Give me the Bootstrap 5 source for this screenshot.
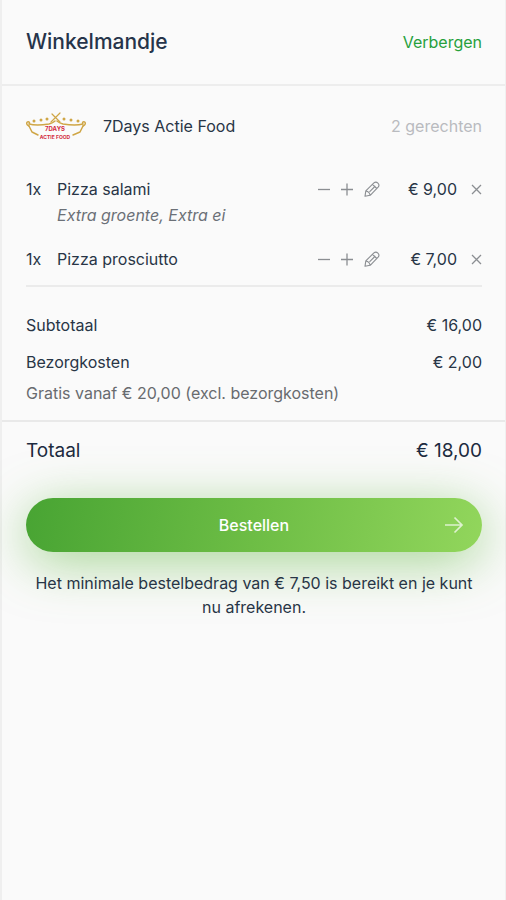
<!DOCTYPE html>
<html lang="nl">
<head>
<meta charset="utf-8">
<meta name="viewport" content="width=device-width, initial-scale=1">
<title>Winkelmandje</title>
<link href="https://cdn.jsdelivr.net/npm/bootstrap@5.3.0/dist/css/bootstrap.min.css" rel="stylesheet">
<style>
  body { font-family: Inter, "Liberation Sans", sans-serif; font-size: 16px; line-height: 24px; color: #283546; background: #fafafa; }
  .basket { border-left: 2px solid #efefef; border-right: 1px solid #f0f0f0; }
  .basket-head, .shop, .lines, .costs, .checkout { padding-left: 24px; padding-right: 23px; }
  .basket-head { padding-top: 26px; padding-bottom: 26px; border-bottom: 2px solid #ededed; }
  .basket-title { font-size: 21px; line-height: 32px; font-weight: 500; color: #26344a; }
  .hide-link { color: #26a03c; }
  .shop { padding-top: 24px; }
  .shop-name { padding-left: 17px; }
  .dish-count { color: #b9bbbf; }
  .dish { line-height: 26px; margin-bottom: 18px; }
  .dish:last-child { margin-bottom: 0; }
  .lines { padding-top: 34px; }
  .dish-list { padding-bottom: 13px; border-bottom: 2px solid #ebebeb; }
  .qty { width: 31px; }
  .extras { color: #6b7077; }
  .tool { color: #8b8e92; line-height: 0; }
  .tools { gap: 11px; }
  .price { width: 77px; }
  .remove { margin-left: 14px; }
  .costs { padding-top: 26px; padding-bottom: 15px; border-bottom: 2px solid #e9e9e9; }
  .cost-row { margin-bottom: 13px; }
  .hint { color: #686b6f; margin-top: -6px; }
  .checkout { padding-top: 16px; }
  .total { font-size: 19px; line-height: 26px; color: #1d2b40; }
  .order { margin-top: 34px; height: 54px; font-weight: 500; color: #fff; background: linear-gradient(100deg, #48a433, #6dbd45 50%, #92d65c); box-shadow: 0 10px 52px rgba(94, 183, 62, .55); }
  .order:hover { color: #fff; }
  .order-arrow { right: 18px; }
  .note { margin-top: 19px; }
</style>
</head>
<body>
<main class="basket min-vh-100">
  <header class="basket-head d-flex justify-content-between align-items-center">
    <h1 class="basket-title m-0">Winkelmandje</h1>
    <a href="#" class="hide-link text-decoration-none">Verbergen</a>
  </header>

  <section class="shop d-flex align-items-center">
    <svg width="60" height="32" viewBox="0 0 60 32" role="img" aria-label="7Days Actie Food">
      <g fill="none" stroke="#cfa646" stroke-width="1.5" stroke-linecap="round" stroke-linejoin="round">
        <path d="M3 16c-4-2-2-5 0-4 1 1 0 2 0 2 7 2 14 1 20 0q4-1 6-3M57 16c4-2 2-5 0-4-1 1 0 2 0 2-7 2-14 1-20 0q-4-1-6-3"/>
        <path d="M3 16l3 6 6 3M57 16l-3 6-7 3"/>
        <path d="M26 4l8 8M34 3l-9 9" stroke-width="1.2"/>
      </g>
      <g fill="#cfa646"><circle cx="8" cy="11" r="1.500"/><circle cx="15" cy="10" r="1.500"/><circle cx="21" cy="9" r="1.500"/><circle cx="38" cy="9" r="1.500"/><circle cx="45" cy="10" r="1.500"/><circle cx="52" cy="11" r="1.500"/></g>
      <g fill="#d32a40" font-family="Inter, sans-serif" font-weight="700" text-anchor="middle"><text x="29" y="21" font-size="6">7DAYS</text><text x="29" y="29" font-size="5">ACTIE FOOD</text></g>
    </svg>
    <span class="shop-name flex-grow-1">7Days Actie Food</span>
    <span class="dish-count">2 gerechten</span>
  </section>

  <section class="lines">
    <ul class="dish-list list-unstyled m-0">
      <li class="dish d-flex align-items-start">
        <span class="qty">1x</span>
        <div class="flex-grow-1">
          <div>Pizza salami</div>
          <em class="extras d-block">Extra groente, Extra ei</em>
        </div>
        <div class="d-flex align-items-center">
          <div class="tools d-flex">
            <button type="button" class="tool btn p-0 border-0" aria-label="Minder"><svg width="12" height="16" viewBox="0 0 12 16" fill="none" stroke="currentColor" stroke-width="1.3"><path d="M0 8.500h12"/></svg></button>
            <button type="button" class="tool btn p-0 border-0" aria-label="Meer"><svg width="12" height="16" viewBox="0 0 12 16" fill="none" stroke="currentColor" stroke-width="1.3"><path d="M0 8.500h12M6 2.500v12"/></svg></button>
            <button type="button" class="tool btn p-0 border-0" aria-label="Bewerken"><svg width="16" height="16" viewBox="0 0 16 16" fill="none" stroke="currentColor" stroke-width="1.1" stroke-linejoin="round"><path d="M1 15.300l.8-5.500L9.900 1.900q2-1.700 4 .2t.2 4L6.200 14.300zM1.800 10q3.700 .6 4.300 4.300M5.500 10.800l5.800-5.800M8.500 3.300l4.200 4.200"/></svg></button>
          </div>
          <span class="price text-end">€ 9,00</span>
          <button type="button" class="remove tool btn p-0 border-0" aria-label="Verwijderen"><svg width="11" height="12" viewBox="0 0 11 12" fill="none" stroke="currentColor" stroke-width="1.3"><path d="M1 2l9 9M10 2l-9 9"/></svg></button>
        </div>
      </li>
      <li class="dish d-flex align-items-start">
        <span class="qty">1x</span>
        <div class="flex-grow-1">Pizza prosciutto</div>
        <div class="d-flex align-items-center">
          <div class="tools d-flex">
            <button type="button" class="tool btn p-0 border-0" aria-label="Minder"><svg width="12" height="16" viewBox="0 0 12 16" fill="none" stroke="currentColor" stroke-width="1.3"><path d="M0 8.500h12"/></svg></button>
            <button type="button" class="tool btn p-0 border-0" aria-label="Meer"><svg width="12" height="16" viewBox="0 0 12 16" fill="none" stroke="currentColor" stroke-width="1.3"><path d="M0 8.500h12M6 2.500v12"/></svg></button>
            <button type="button" class="tool btn p-0 border-0" aria-label="Bewerken"><svg width="16" height="16" viewBox="0 0 16 16" fill="none" stroke="currentColor" stroke-width="1.1" stroke-linejoin="round"><path d="M1 15.300l.8-5.500L9.900 1.900q2-1.700 4 .2t.2 4L6.200 14.300zM1.800 10q3.700 .6 4.300 4.300M5.500 10.800l5.800-5.800M8.500 3.300l4.200 4.200"/></svg></button>
          </div>
          <span class="price text-end">€ 7,00</span>
          <button type="button" class="remove tool btn p-0 border-0" aria-label="Verwijderen"><svg width="11" height="12" viewBox="0 0 11 12" fill="none" stroke="currentColor" stroke-width="1.3"><path d="M1 2l9 9M10 2l-9 9"/></svg></button>
        </div>
      </li>
    </ul>
  </section>

  <section class="costs">
    <div class="cost-row d-flex justify-content-between"><span>Subtotaal</span><span>€ 16,00</span></div>
    <div class="cost-row d-flex justify-content-between"><span>Bezorgkosten</span><span>€ 2,00</span></div>
    <p class="hint mb-0">Gratis vanaf € 20,00 (excl. bezorgkosten)</p>
  </section>

  <section class="checkout">
    <div class="total d-flex justify-content-between"><span>Totaal</span><span>€ 18,00</span></div>
    <button type="button" class="order btn border-0 rounded-pill w-100 position-relative">Bestellen
      <svg class="order-arrow position-absolute top-50 translate-middle-y" width="20" height="18" viewBox="0 0 20 18" fill="none" stroke="#fff" stroke-opacity=".7" stroke-width="1.7"><path d="M1 9h17M10.500 1.500L18 9l-7.500 7.500"/></svg>
    </button>
    <p class="note text-center position-relative mb-0">Het minimale bestelbedrag van € 7,50 is bereikt en je kunt nu afrekenen.</p>
  </section>
</main>
<script src="https://cdn.jsdelivr.net/npm/bootstrap@5.3.0/dist/js/bootstrap.bundle.min.js"></script>
</body>
</html>
